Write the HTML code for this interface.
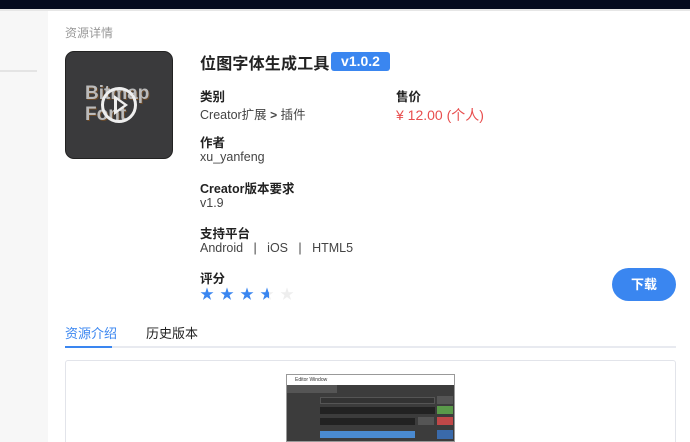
<!DOCTYPE html>
<html><head><meta charset="utf-8"><style>
*{margin:0;padding:0;box-sizing:border-box}
html,body{width:690px;height:442px;overflow:hidden}
body{background:#fff;font-family:"Liberation Sans","Noto Sans CJK SC",sans-serif;position:relative;color:#222}
.a{position:absolute;white-space:nowrap}
.lab{font-size:12.5px;font-weight:bold;color:#222}
.val{font-size:12.5px;color:#444}
</style></head><body>
<div class="a" style="left:0;top:0;width:690px;height:9px;background:#040a1e"></div>
<div class="a" style="left:0;top:9px;width:690px;height:2px;background:#e6e6e6"></div>
<div class="a" style="left:0;top:11px;width:48px;height:431px;background:#f7f7f7"></div>
<div class="a" style="left:0;top:70px;width:37px;height:2px;background:#e4e4e4"></div>
<div class="a" style="left:65px;top:24px;font-size:12px;color:#999">资源详情</div>
<div class="a" style="left:65px;top:51px;width:108px;height:108px;border-radius:9px;background:#3a3a3c;border:1px solid #222;overflow:hidden">
 <div class="a" style="left:19px;top:31px;font-size:19px;font-weight:bold;color:#bbb;line-height:21px;text-shadow:1px 1px 0 #6a4a2a">Bitmap<br>Font</div>
 <div class="a" style="left:35px;top:35px;width:36px;height:36px;border:3px solid #eee;border-radius:50%"></div>
 <div class="a" style="left:48px;top:43px;width:0;height:0;border-left:14px solid #eee;border-top:10px solid transparent;border-bottom:10px solid transparent"></div>
 <div class="a" style="left:51px;top:48px;width:0;height:0;border-left:7px solid #3a3a3c;border-top:5px solid transparent;border-bottom:5px solid transparent"></div>
</div>
<div class="a" style="left:200px;top:50px;font-size:16px;font-weight:bold;color:#222;letter-spacing:0.2px">位图字体生成工具</div>
<div class="a" style="left:331px;top:52px;width:59px;height:19px;background:#3a86f0;border-radius:3px;color:#fff;font-size:14px;font-weight:bold;text-align:center;line-height:19px">v1.0.2</div>
<div class="a lab" style="left:200px;top:86px">类别</div>
<div class="a val" style="left:200px;top:104px">Creator扩展 <b style="font-size:12px">&gt;</b> 插件</div>
<div class="a lab" style="left:396px;top:86px">售价</div>
<div class="a" style="left:396px;top:105px;font-size:14px;color:#e84e4e">¥ 12.00 (个人)</div>
<div class="a lab" style="left:200px;top:132px">作者</div>
<div class="a val" style="left:200px;top:150px">xu_yanfeng</div>
<div class="a lab" style="left:200px;top:178px">Creator版本要求</div>
<div class="a val" style="left:200px;top:196px">v1.9</div>
<div class="a lab" style="left:200px;top:223px">支持平台</div>
<div class="a val" style="left:200px;top:241px">Android &nbsp; | &nbsp; iOS &nbsp; | &nbsp; HTML5</div>
<div class="a lab" style="left:200px;top:268px">评分</div>
<div class="a" style="left:200px;top:284px;font-size:14px;letter-spacing:6px;color:#3a86f0">★★★<span style="background:linear-gradient(90deg,#3a86f0 45%,#eee 45%);-webkit-background-clip:text;color:transparent">★</span><span style="color:#eee">★</span></div>
<div class="a" style="left:612px;top:268px;width:64px;height:33px;border-radius:17px;background:#3a86f0;color:#fff;font-size:13px;font-weight:bold;text-align:center;line-height:33px">下载</div>
<div class="a" style="left:65px;top:323px;font-size:13px;color:#3a86f0">资源介绍</div>
<div class="a" style="left:146px;top:323px;font-size:13px;color:#222">历史版本</div>
<div class="a" style="left:65px;top:346px;width:611px;height:2px;background:#e8eaf0"></div>
<div class="a" style="left:65px;top:346px;width:47px;height:2px;background:#3a86f0"></div>
<div class="a" style="left:65px;top:360px;width:611px;height:90px;border:1px solid #e2e4ea;border-radius:3px"></div>
<div class="a" style="left:286px;top:374px;width:169px;height:68px;background:#3c3c3c;border:1px solid #999">
 <div class="a" style="left:0;top:0;width:167px;height:10px;background:#fff;font-size:5px;color:#333;padding-left:8px;line-height:10px">Editor Window</div>
 <div class="a" style="left:0;top:10px;width:50px;height:8px;background:#555"></div>
 <div class="a" style="left:33px;top:22px;width:115px;height:7px;background:#333;border:1px solid #555"></div>
 <div class="a" style="left:150px;top:21px;width:16px;height:8px;background:#555"></div>
 <div class="a" style="left:33px;top:32px;width:115px;height:7px;background:#222"></div>
 <div class="a" style="left:150px;top:31px;width:16px;height:8px;background:#5a9a4a"></div>
 <div class="a" style="left:33px;top:43px;width:95px;height:7px;background:#222"></div>
 <div class="a" style="left:131px;top:42px;width:16px;height:8px;background:#555"></div>
 <div class="a" style="left:150px;top:42px;width:16px;height:8px;background:#c04848"></div>
 <div class="a" style="left:33px;top:56px;width:95px;height:7px;background:#4a8ad0"></div>
 <div class="a" style="left:150px;top:55px;width:16px;height:9px;background:#3a6aaa"></div>
</div>
</body></html>
